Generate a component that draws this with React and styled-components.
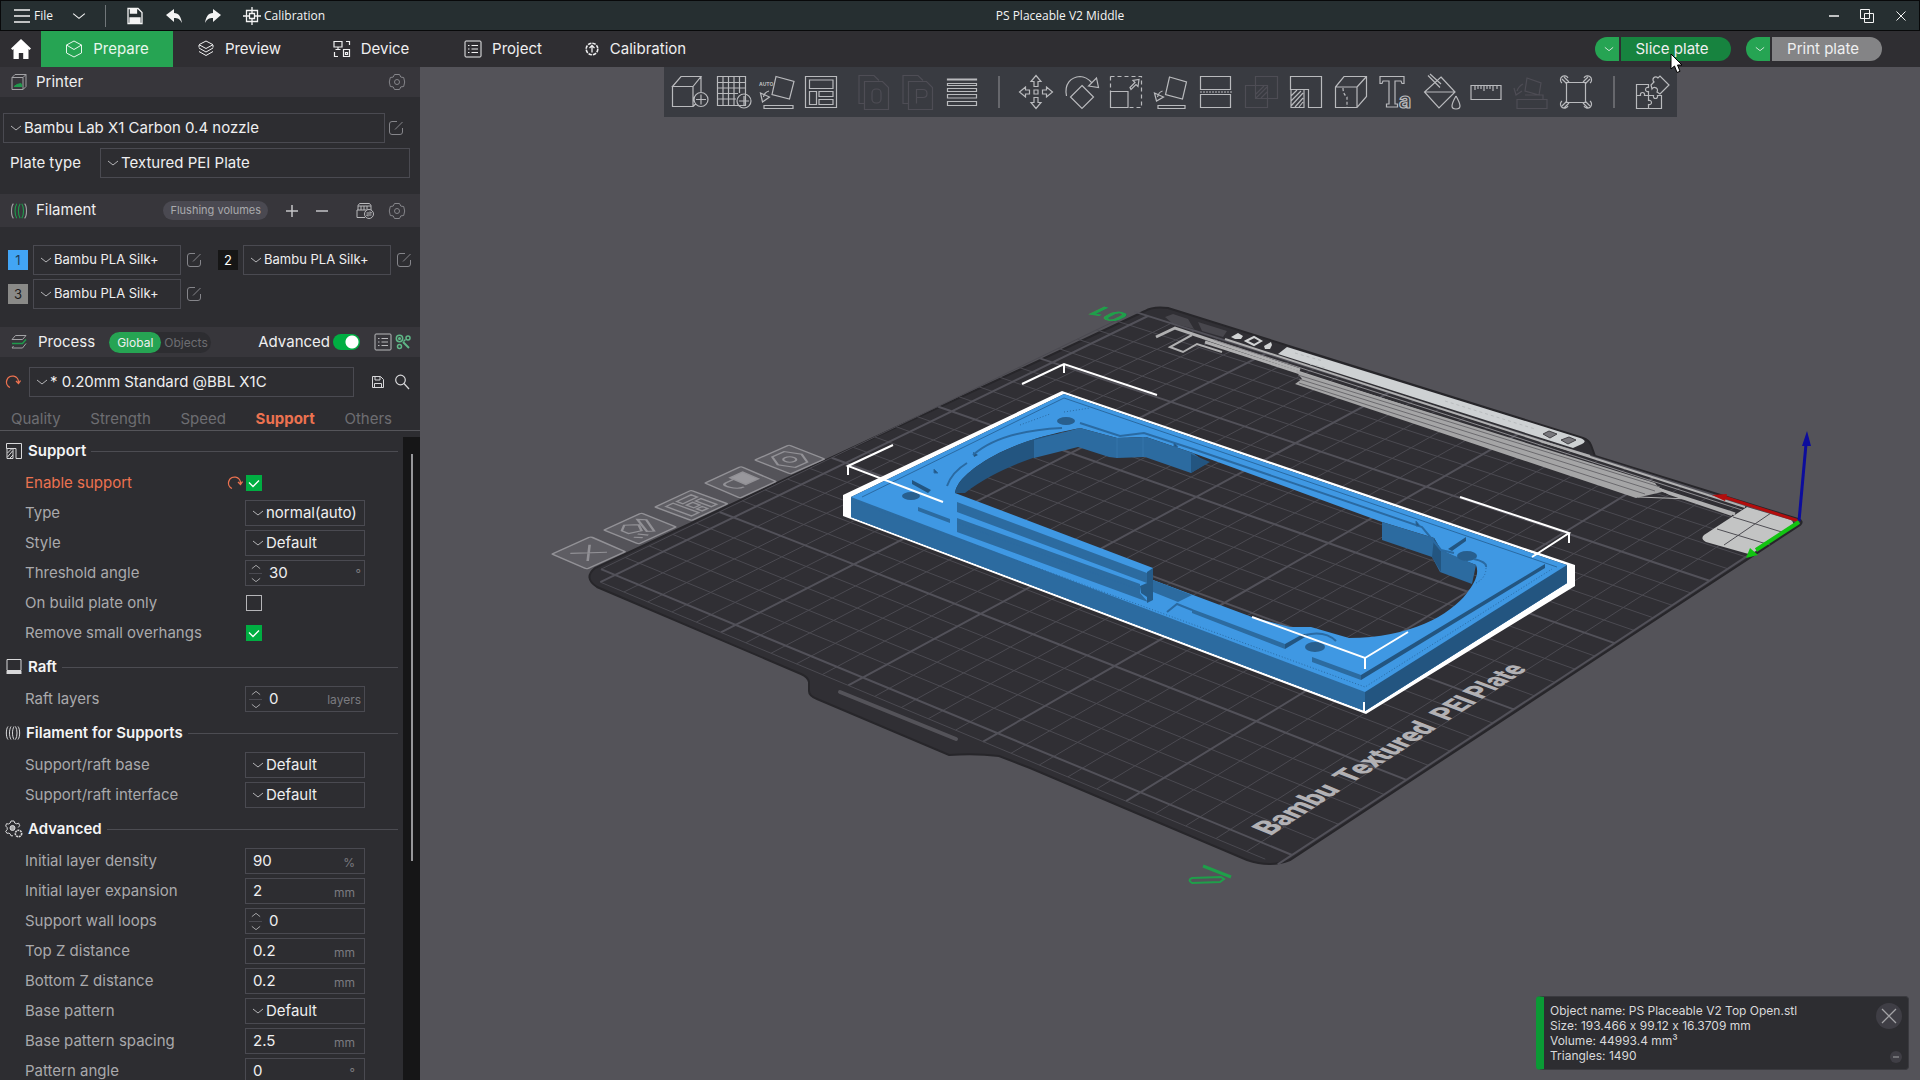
import React from 'react'
import styled, { createGlobalStyle } from 'styled-components'

const GlobalStyle = createGlobalStyle`
  * {
    box-sizing: border-box;
  }

  body {
    margin: 0;
    overflow: hidden;
    background: #2d2d31;
    color: #efeff0;
    font-family: Inter, Roboto, sans-serif;
    font-size: 15px;
    font-feature-settings: "calt" 0;
  }

  button, input, select {
    margin: 0;
    padding: 0;
    border: 0;
    border-radius: 0;
    outline: 0;
    background: none;
    color: inherit;
    font: inherit;
  }

  svg {
    display: block;
    flex: none;
  }
`

/* ---------- icons ---------- */

const Icon = ({ size = 16, box = size, children, ...props }) => (
  <svg
    width={size}
    height={size}
    viewBox={`0 0 ${box} ${box}`}
    fill="none"
    stroke="currentColor"
    aria-hidden="true"
    {...props}
  >
    {children}
  </svg>
)

const Chevron = ({ size = 12, ...props }) => (
  <Icon size={size} box={12} {...props}><path d="M1 4l5 4 5-4" /></Icon>
)

const EditIcon = () => (
  <Icon size={16}>
    <path d="M9 1.500H4A2.500 2.500 0 0 0 1.500 4v8A2.500 2.500 0 0 0 4 14.500h8a2.500 2.500 0 0 0 2.500-2.500V8M7 9.500L14.500 2" />
  </Icon>
)

const UndoIcon = () => (
  <Icon size={16} strokeWidth="1.300">
    <path d="M5 13.500A6 6 0 1 1 13.500 8.500M11 7l2.500 2.500L15.500 6.500" />
  </Icon>
)

const GearIcon = () => (
  <Icon size={18}>
    <path d="M6.500 1.500h5l1.300 2.600 2.900.4 1 4.500-1 4.500-2.900.4-1.300 2.600h-5l-1.300-2.600-2.900-.4-1-4.500 1-4.500 2.900-.4z" strokeLinejoin="round" />
    <circle cx="9" cy="9" r="2.500" />
  </Icon>
)

const PrinterIcon = () => (
  <Icon size={18}>
    <path d="M2 4.500L5 1.500h11v12l-3 3H2zM2 4.500h11v12M13 4.500l3-3" />
    <path d="M4 13.500h8l-1-3-4 1z" fill="#1f9a4c" stroke="#1f9a4c" />
  </Icon>
)

const SpoolIcon = ({ accent = 'currentColor', size = 16 }) => (
  <Icon size={size} box={16}>
    <path d="M3 1.500C.800 4 .800 12 3 14.500M13 1.500c2.200 2.500 2.200 10.500 0 13" />
    <g stroke={accent}>
      <path d="M6 1.500c-2 3-2 10 0 13M9 1.500c-2 3-2 10 0 13M10.500 1.500c2 3 2 10 0 13" />
    </g>
  </Icon>
)

const ProcessIcon = () => (
  <Icon size={18}>
    <path d="M5.500 2.500h10.500l-3.500 4H2zM16 10.500l-3.500 4.500H2l1.500-2" />
    <path d="M2 10.500h10.500L16 6.500" stroke="#1f9a4c" strokeWidth="1.500" />
  </Icon>
)

const AmsIcon = () => (
  <Icon size={18}>
    <path d="M2 8V3.500L3.500 1.500h10L15 3.500V8M2 4h13M5 4v4M8 4v4M11 4v4M1 8v7.500h8M1 8h9" />
    <circle cx="13" cy="12" r="4.500" />
    <path d="M10.500 11h5l-1.500-1.500M15.500 13h-5l1.500 1.500" />
  </Icon>
)

const ListIcon = ({ size = 18 }) => (
  <Icon size={size} box={18}>
    <rect x="1" y="1" width="16" height="16" rx="1" />
    <path d="M4 5.500h1.500M7.500 5.500H14M4 9h1.500M7.500 9H14M4 12.500h1.500M7.500 12.500H14" />
  </Icon>
)

const CompareIcon = () => (
  <Icon size={16} strokeWidth="1.500" color="#5fb787">
    <circle cx="4.500" cy="4.500" r="3.200" />
    <circle cx="4.500" cy="4.500" r=".800" />
    <circle cx="4.500" cy="12.500" r="2" />
    <circle cx="13" cy="4" r="2" />
    <path d="M8 8l6 6" strokeWidth="2" />
    <path d="M8.500 7.500l2-2" />
  </Icon>
)

const SmallSaveIcon = () => (
  <Icon size={14}>
    <path d="M1.500 1.500h8l3 3v8h-11zM4 1.500V5h5V1.500M3.500 12.500V8.500h7v4" />
  </Icon>
)

const SearchIcon = () => (
  <Icon size={16} strokeWidth="1.200"><circle cx="6.500" cy="6" r="4.800" /><path d="M10 9.500l5 5.500" /></Icon>
)

const SupportIcon = () => (
  <Icon size={18}>
    <path d="M1.500 1.500h15v15H11v-10H1.500zM2 6.500v10h6v-10M2.500 11l4-4M2.500 15l5-6M5 16l3-3" />
  </Icon>
)

const RaftIcon = () => (
  <Icon size={18}><path d="M2 1.500h14v11H2z" /><path d="M1.500 14.500h15" strokeWidth="3" /></Icon>
)

const GearsIcon = () => (
  <Icon size={18}>
    <path d="M6 1l3 0 .7 2 2 .8 2-.6 1 2.500-1.500 1.800M6 1l-.8 2-1.700 1-2-.3L.7 6l1.500 1.700v2L.7 11.300l1.200 2 2-.2 1.500 1 .6 1.700H8" />
    <circle cx="7.500" cy="8" r="2.500" fill="#a8a8aa" />
    <circle cx="13.500" cy="13.500" r="3.200" strokeDasharray="2 .7" strokeWidth="1.600" />
  </Icon>
)

const CubeIcon = () => (
  <Icon size={18}>
    <path d="M9 1l7.500 4v8L9 17l-7.500-4V5zM1.500 5L9 9.500 16.500 5" strokeLinejoin="round" />
  </Icon>
)

const LayersIcon = () => (
  <Icon size={18} strokeLinejoin="round">
    <path d="M9 1l7 3.700L9 8.500 2 4.700zM2 8l7 4 7-4M2 11.500l7 4 7-4M2 5v2.500M16 5v2.500" />
  </Icon>
)

const DeviceIcon = () => (
  <Icon size={18} strokeWidth="1.200">
    <path d="M1 1.500h8v5.500H1zM5 7v2.500M2.500 9.500h5M13 1.500h3.500V5M1.500 12v4.500H5M10.500 9.500h6v7h-6zM12.500 12.500h2v2h-2z" />
  </Icon>
)

const FlowIcon = () => (
  <Icon size={16} strokeWidth="1.300">
    <circle cx="8" cy="8" r="5.800" strokeDasharray="3.500 1" strokeWidth="1.600" />
    <path d="M8 4.500v7M5.500 7L8 4.500 10.500 7" />
  </Icon>
)

const HomeIcon = () => (
  <Icon size={22} fill="#fff" stroke="none">
    <path d="M11 1L1 10.500 2.500 12l1-1V21h5.300v-6h4.400v6h5.300V11l1 1 1.500-1.500z" />
  </Icon>
)

const Pointer = styled.svg`
  position: absolute;
  top: 16px;
  left: 75px;
  z-index: 5;
  pointer-events: none;
`

/* ---------- title bar ---------- */

const TitleBar = styled.header`
  display: flex;
  flex: none;
  align-items: center;
  height: 31px;
  padding: 0 10px 0 12px;
  border: 1px solid #08090a;
  background: #262f31;
  color: #f4f4f4;
  font-family: "Open Sans", "Noto Sans", sans-serif;
  font-size: 12px;
`

const TitleGroup = styled.div`
  display: flex;
  align-items: center;
  gap: ${props => props.$gap}px;
`

const TitleButton = styled.button`
  display: flex;
  align-items: center;
  gap: 3px;
`

const TitleDivider = styled.span`
  width: 1px;
  height: 22px;
  margin: 0 20px 0 0;
  background: #71777a;
`

const Title = styled.h1`
  flex: 1;
  margin: 0;
  padding-right: 32px;
  font-size: 12px;
  font-weight: 400;
  text-align: center;
`

/* ---------- navigation ---------- */

const NavBar = styled.nav`
  display: flex;
  flex: none;
  align-items: center;
  height: 36px;
  padding-right: 38px;
  background: #2f2e32;
`

const HomeButton = styled.button`
  display: flex;
  justify-content: center;
  width: 41px;
`

const NavTab = styled.button`
  display: flex;
  align-items: center;
  justify-content: center;
  gap: 10px;
  width: 132px;
  height: 36px;
  padding-bottom: 1px;
  background: ${props => (props.$active ? '#26a453' : 'transparent')};
  color: ${props => (props.$active ? '#e6f7ec' : '#efeff0')};
`

const NavActions = styled.div`
  display: flex;
  gap: 15px;
  margin-left: auto;
`

const SplitButton = styled.div`
  position: relative;
  display: flex;
  gap: 2px;
  height: 24px;
`

const SplitToggle = styled.button`
  display: flex;
  align-items: center;
  justify-content: center;
  width: 24px;
  padding-left: 4px;
  border-radius: 12px 0 0 12px;
  background: #26a453;
`

const SplitMain = styled.button`
  width: 110px;
  padding: 0 8px 1px 0;
  border-radius: 0 12px 12px 0;
  background: ${props => (props.$primary ? '#17833f' : '#848486')};
`

/* ---------- sidebar ---------- */

const Shell = styled.div`
  display: flex;
  flex-direction: column;
  height: 100vh;
`

const Body = styled.div`
  display: flex;
  flex: 1;
  min-height: 0;
`

const Sidebar = styled.aside`
  display: flex;
  flex: none;
  flex-direction: column;
  width: 420px;
  background: #2d2d31;
`

const PanelHeader = styled.div`
  display: flex;
  flex: none;
  align-items: center;
  gap: ${props => props.$gap || 16}px;
  height: ${props => props.$height || 30}px;
  padding: 0 ${props => props.$end || 14}px 0 10px;
  background: #37363b;
  color: #a3a3a6;
`

const PanelTitle = styled.h2`
  margin: 0;
  padding-bottom: 2px;
  color: #efeff0;
  font-size: 15px;
  font-weight: 400;
`

const HeaderTools = styled.div`
  display: flex;
  align-items: center;
  gap: ${props => props.$gap || 0}px;
  margin-left: auto;
`

const IconButton = styled.button`
  display: flex;
  flex: none;
  align-items: center;
  justify-content: center;
  color: ${props => props.$color || '#85858a'};
`

const SelectBox = styled.div`
  display: flex;
  flex: ${props => (props.$width ? 'none' : '1')};
  align-items: center;
  width: ${props => (props.$width ? `${props.$width}px` : 'auto')};
  height: ${props => props.$height || 30}px;
  padding-left: 6px;
  border: 1px solid #4a4a51;
  color: #b5b5b8;
`

const SelectInput = styled.select`
  flex: 1;
  min-width: 0;
  height: 100%;
  padding: 0 0 2px 2px;
  appearance: none;
  color: #efeff0;
  font-size: ${props => props.$size || 15}px;
`

const PrinterSettings = styled.div`
  display: flex;
  flex-direction: column;
  gap: 5px;
  padding: 16px 10px 16px 3px;
`

const SettingsLine = styled.div`
  display: flex;
  align-items: center;
  gap: ${props => props.$gap || 0}px;
  padding: ${props => props.$padding || 0};
`

const PlateLabel = styled.label`
  width: 97px;
  padding: 0 0 2px 7px;
`

const FlushButton = styled.button`
  height: 19px;
  margin-right: 2px;
  padding: 0 7px 1px;
  border-radius: 10px;
  background: #4a4951;
  color: #a9a9ad;
  font-size: 11px;
`

const Filaments = styled.div`
  display: grid;
  grid-template-columns: 210px 210px;
  row-gap: 4px;
  padding: 18px 0;
`

const Filament = styled.div`
  display: flex;
  align-items: center;
  padding-left: 8px;
`

const Swatch = styled.button`
  width: 20px;
  height: 20px;
  margin-right: 5px;
  background: ${props => props.$color};
  color: ${props => props.$text};
  font-size: 13px;
`

const FilamentEdit = styled(IconButton)`
  margin-left: 5px;
`

const ScopeSwitch = styled.div`
  display: flex;
  height: 21px;
  margin-left: 4px;
  border-radius: 11px;
  background: #2d2d31;
  font-size: 12px;
`

const ScopeButton = styled.button`
  padding: 0 ${props => (props.$active ? 8 : 3)}px;
  border-radius: 11px;
  background: ${props => (props.$active ? '#26a453' : 'transparent')};
  color: ${props => (props.$active ? '#efeff0' : '#6d6d72')};
`

const Switch = styled.input`
  width: 27px;
  height: 16px;
  margin-right: 11px;
  border-radius: 8px;
  appearance: none;
  background: radial-gradient(circle at 19px 8px, #fff 6px, transparent 7px) #00ae42;
`

const PresetLine = styled.div`
  display: flex;
  align-items: center;
  padding: 10px 10px 10px 5px;
`

const PresetTools = styled.div`
  display: flex;
  align-items: center;
  gap: 9px;
  margin-left: 17px;
`

const Tabs = styled.div`
  display: flex;
  flex: none;
  justify-content: space-between;
  height: 24px;
  padding: 0 28px 0 11px;
  border-bottom: 1px solid #55555a;
`

const Tab = styled.button`
  color: ${props => (props.$active ? '#ec7250' : '#6d6d72')};
  font-weight: ${props => (props.$active ? 700 : 400)};
`

const ScrollArea = styled.div`
  display: flex;
  flex: 1;
  min-height: 0;
  margin-top: 6px;
`

const Options = styled.div`
  flex: 1;
  margin-top: -5px;
  padding-right: 5px;
  overflow: hidden;
`

const ScrollTrack = styled.div`
  width: 17px;
  padding: 17px 7px 0 8px;
  background: #161617;
`

const ScrollThumb = styled.div`
  height: 65%;
  background: #97979a;
`

const OptionGroup = styled.fieldset`
  margin: 0;
  padding: 0;
  border: 0;
`

const GroupTitle = styled.div`
  display: flex;
  align-items: center;
  gap: 5px;
  height: 36px;
  padding: 2px 0 0 5px;
  color: #d8d8da;

  &::after {
    content: '';
    flex: 1;
    height: 1px;
    background: #4c4c52;
  }
`

const GroupName = styled.h3`
  margin: 0;
  padding-bottom: 2px;
  color: #f4f4f5;
  font-size: 15px;
  font-weight: 600;
`

const OptionRow = styled.div`
  display: flex;
  align-items: center;
  height: 30px;
  padding-left: 25px;
`

const OptionLabel = styled.label`
  width: 200px;
  padding-bottom: 2px;
  color: ${props => (props.$changed ? '#ec7250' : '#a9a9ac')};
`

const ResetSlot = styled.span`
  width: 21px;
  padding-left: 2px;
  color: #ec7250;
`

const Field = styled.div`
  display: flex;
  align-items: center;
  width: 120px;
  height: 26px;
  margin-left: -1px;
  padding-right: ${props => (props.$tight ? 3 : 9)}px;
  border: 1px solid #4a4a51;
`

const FieldInput = styled.input`
  flex: 1;
  min-width: 0;
  padding: 0 0 2px 7px;
`

const Unit = styled.span`
  padding-top: ${props => (props.$tight ? 0 : 2)}px;
  color: #7b7b80;
  font-size: 12px;
`

const Spinner = styled.div`
  display: flex;
  flex-direction: column;
  margin-left: 3px;
  color: #b9b9bc;
`

const SpinButton = styled.button`
  display: flex;
  align-items: center;
  justify-content: center;
  width: 13px;
  height: 12px;

  & + & {
    border-top: 1px solid #4a4a51;
  }
`

const Check = styled.input`
  width: 16px;
  height: 16px;
  appearance: none;
  border: 1px solid #b5b5b8;

  &:checked {
    border: 0;
    background: #00ae42;
  }
`

const CheckWrap = styled.span`
  display: grid;
  color: #fff;

  & > * {
    grid-area: 1 / 1;
  }

  & > svg {
    pointer-events: none;
  }
`

const OptionSelectWrap = styled.div`
  display: flex;
  margin-left: -1px;
`

/* ---------- viewport ---------- */

const Viewport = styled.main`
  position: relative;
  display: flex;
  flex: 1;
  justify-content: center;
  align-items: flex-start;
  min-width: 0;
  background: #545359;
`

const Scene = styled.svg`
  position: absolute;
  inset: 0;
  width: 100%;
  height: 100%;
`

const Toolbar = styled.div`
  position: relative;
  display: flex;
  align-items: center;
  height: 50px;
  padding: 0 3px;
  background: #393b41;
`

const ToolGroup = styled.div`
  display: flex;
  margin-right: ${props => props.$after || 0}px;
`

const ToolButton = styled.button`
  display: flex;
  align-items: center;
  justify-content: center;
  width: ${props => props.$width || 45}px;
  height: 50px;
  color: ${props => (props.disabled ? '#4e4d55' : '#b9babd')};
`

const ToolDivider = styled.span`
  width: 2px;
  height: 32px;
  margin: 0 14px;
  background: #66676c;
`

const InfoCard = styled.section`
  position: absolute;
  right: 11px;
  bottom: 10px;
  display: flex;
  justify-content: space-between;
  width: 373px;
  padding: 6px 6px 6px 6px;
  border: 1px solid #3a3a3f;
  border-left: 8px solid #0a9a35;
  border-radius: 4px;
  background: #2d2d31;
`

const InfoText = styled.p`
  margin: 0;
  color: #d9d9db;
  font-size: 12px;
  line-height: 15px;
`

const InfoTools = styled.div`
  display: flex;
  flex-direction: column;
  align-items: center;
  justify-content: space-between;
`

const RoundButton = styled.button`
  display: flex;
  align-items: center;
  justify-content: center;
  width: ${props => props.$size}px;
  height: ${props => props.$size}px;
  border-radius: 50%;
  background: #3f3e45;
  color: #a3a3a6;

  &:last-child {
    align-self: flex-end;
  }
`

/* ---------- plate projection ---------- */

const PLATE = 250
const CORNERS = [[1799, 522], [1148, 316], [615, 575], [1292, 855]]

const makeProjection = ([a, b, c, d]) => {
  const dx1 = b[0] - c[0]
  const dx2 = d[0] - c[0]
  const sx = a[0] - b[0] + c[0] - d[0]
  const dy1 = b[1] - c[1]
  const dy2 = d[1] - c[1]
  const sy = a[1] - b[1] + c[1] - d[1]
  const det = dx1 * dy2 - dx2 * dy1
  const g = (sx * dy2 - dx2 * sy) / det
  const h = (dx1 * sy - sx * dy1) / det

  return (x, y) => {
    const u = x / PLATE
    const v = y / PLATE
    const w = g * u + h * v + 1
    return [
      ((b[0] - a[0] + g * b[0]) * u + (d[0] - a[0] + h * d[0]) * v + a[0]) / w,
      ((b[1] - a[1] + g * b[1]) * u + (d[1] - a[1] + h * d[1]) * v + a[1]) / w,
    ]
  }
}

const project = makeProjection(CORNERS)

const segment = (x1, y1, x2, y2) => `M${project(x1, y1)}L${project(x2, y2)}`

// affine frame lying on the plate at x, y; turned frames read along -y
const planeFrame = (x, y, turned) => {
  const o = project(x, y)
  const px = project(x + 1, y)
  const py = project(x, y + 1)
  const ex = [px[0] - o[0], px[1] - o[1]]
  const ey = [py[0] - o[0], py[1] - o[1]]
  const right = turned ? [-ey[0], -ey[1]] : ex
  const down = turned ? [-ex[0], -ex[1]] : [-ey[0], -ey[1]]
  return `matrix(${[...right, ...down, ...o].join(' ')})`
}

const gridSteps = Array.from({ length: 26 }, (_, i) => i * 10)

const gridPath = steps => steps
  .map(s => segment(s, 0, s, 256) + segment(0, s, 256, s))
  .join('')

const plateWords = [
  { text: 'Bambu', y: 246 },
  { text: 'Textured', y: 211 },
  { text: 'PEI', y: 167 },
  { text: 'Plate', y: 151 },
]

const Grid = () => (
  <g fill="none">
    <path d={gridPath(gridSteps.filter(s => s % 50))} stroke="#4b4a51" />
    <path d={gridPath(gridSteps.filter(s => s % 50 === 0))} stroke="#525159" strokeWidth="2" />
    <path d={segment(256, 4, 256, 250) + segment(4, 256, 250, 256)} stroke="#4b4a51" />
  </g>
)

const plateBadges = [
  { frame: '38.600 -17.300 34.700 15 552 554', art: <path d="M.25 .25L.75 .75M.75 .25L.25 .75" /> },
  { frame: '37.500 -17 34.500 14 604 530', art: <path d="M.2 .3L.4 .15 .6 .35 .45 .6 .2 .5zM.75 .15L.85 .3 .6 .8 .5 .7zM.15 .7L.25 .85M.3 .65L.4 .85" /> },
  { frame: '36 -16.700 36.500 13.500 655 507', art: <path d="M.15 .15H.35V.85H.15zM.45 .15H.85V.32H.45zM.45 .42H.62V.62H.45zM.7 .42H.85V.85H.7zM.45 .7H.6V.85H.45z" /> },
  { frame: '36 -16.500 35 15 705 483', art: <><path d="M.5 .2H.85V.65H.5z" fill="#98979c" /><path d="M.5 .3H.3Q.15 .3 .2 .5T.4 .7" /></> },
  { frame: '34 -15 35.500 14 755 460', art: <><path d="M.35 .15L.7 .15 .85 .5 .65 .85 .3 .85 .15 .5z" /><circle cx=".5" cy=".5" r=".13" /></> },
]

const Plate = () => (
  <g>
    <path
      d="M1145 311Q1153 306 1168 308L1184 313 1583 438Q1589 440 1591 445L1595 456 1798 519Q1804 521 1800 525L1600 656 1290 860Q1270 868 1247 860L1030 768 999 756Q975 753 949 755L817 699Q809 696 809 691V682Q808 677 801 674L597 587Q583 578 595 568Z"
      fill="#302f34"
      stroke="#27262a"
      strokeWidth="2"
    />
    <path d="M1165 317L1173 314 1188 319 1194 329 1172 323ZM1198 322L1227 331 1223 337 1202 331Z" fill="#48474d" />
    <path d="M840 692L956 739" stroke="#545359" strokeWidth="4" strokeLinecap="round" />
    <Grid />
    <path d="M1747 507L1791 520Q1795 523 1792 526L1754 552Q1750 555 1745 553L1706 542Q1700 539 1704 535Z" fill="#c3c4c4" />
    <path d="M1771 513L1724 545M1733 517L1785 533M1717 529L1770 545" stroke="#4e4d53" />
    <g fill="none" stroke="#b0b0b1" strokeWidth="3">
      <path d="M1156 337L1175 328 1228 346 1300 370" />
      <path d="M1192 335L1170 347 1183 352 1197 344 1222 352" strokeWidth="2" />
      <path d="M1225 339L1745 507" strokeWidth="2" />
      <path d="M1205 342L1735 514" />
      <path d="M1214 340L1742 510" strokeWidth="1" stroke="#8c8b8f" />
      <path d="M1638 497L1690 499" strokeWidth="1" />
      <path d="M1650 484L1670 494 1732 515" strokeWidth="2" />
    </g>
    <path d="M1296 371L1655 483 1662 492 1636 498 1295 384 1302 379Z" fill="#a5a5a6" />
    <path d="M1298 375L1660 487M1299 379L1655 491M1299 383L1645 494" stroke="#6b6a6e" />
    <path d="M1287 347L1580 438Q1588 441 1582 444L1573 448 1278 354Z" fill="#ced1d3" />
    <path d="M1590 456L1540 441" stroke="#b0b0b1" strokeWidth="2" />
    <path d="M1543 434l6-3 8 3-7 4zM1561 440l8-3 7 3-8 4z" fill="#77767b" stroke="#444347" />
    <path d="M1295 353l28 8M1310 364l16 4M1445 401l90 28" stroke="#b8bbbd" strokeDasharray="3 3" />
    <g fill="#d2d4d5">
      <path d="M1231 337l7-4 5 3-2 3-6 0zM1264 346l7-4 1 3-2 4-5 0z" />
      <path d="M1246 341l8-4 7 4-7 4z" fill="none" stroke="#d2d4d5" strokeWidth="2" />
    </g>
    <g fill="#b2b1b4" fontFamily="Roboto, sans-serif" fontWeight="900" fontSize="9.500">
      {plateWords.map(word => (
        <text key={word.text} transform={planeFrame(10, word.y, true)}>{word.text}</text>
      ))}
    </g>
    <text transform={planeFrame(255, 3)} fill="#1f9f4a" fontFamily="Roboto, sans-serif" fontWeight="700" fontSize="12">01</text>
    <g fill="none" stroke="#1f9f4a" strokeWidth="3">
      <path d="M1203 866L1231 877" />
      <path d="M1192 878L1221 877 1224 879 1220 882 1192 883Q1187 880 1192 878Z" strokeWidth="2" />
    </g>
    {plateBadges.map(({ frame, art }) => (
      <g key={frame} transform={`matrix(${frame})`} fill="none" stroke="#929196" strokeWidth=".05">
        <rect width="1" height="1" rx=".04" fill="#5e5d63" />
        {art}
      </g>
    ))}
  </g>
)

const holeEdge = 'M955 493C957 478 980 463 999 453C1020 443 1040 436 1080 428L1117 438 1146 437 1193 453 1382 522 1434 538 1441 550 1453 556 1476 565C1480 575 1473 585 1467 593C1450 615 1410 638 1349 638L1311 627 1290 627 1252 617 1153 580V568L987 505Z'

const Model = () => (
  <g>
    <path d="M1062 391L843 495V516L1366 714 1575 586V565ZM851 497L1064 394 1567 565V583L1365 711 851 517Z" fill="#fff" fillRule="evenodd" />
    <path d={`M851 497L1064 394 1567 565V583L1365 711 851 517Z${holeEdge}`} fill="#3f98e3" fillRule="evenodd" />

    <path d="M851 497L1365 692V711L851 517Z" fill="#2c6ba0" />
    <path d="M1365 692L1567 565V583L1365 711Z" fill="#235580" />

    <path d="M955 493C957 478 980 463 999 453C1020 443 1040 436 1062 433L1064 448C1030 458 995 470 965 493Z" fill="#235580" />
    <path d="M1034 440L1080 428 1117 438 1146 437 1193 453 1207 463 1191 473 1145 457 1117 458 1109 457 1078 447 1034 458Z" fill="#2c6ba0" />
    <path d="M1191 454L1210 462 1191 473Z" fill="#235580" />
    <path d="M1117 438V458M1143 437V457" stroke="#3476ab" />
    <path d="M1382 522L1434 538 1441 550 1476 565 1472 584 1440 572 1432 557 1382 540Z" fill="#2c6ba0" />
    <path d="M1434 538L1441 550V572L1432 557Z" fill="#235580" />

    <path d="M957 502L1147 573V583L957 512ZM957 518L1140 584V593L1148 602 957 532Z" fill="#2c6ba0" />
    <path d="M1147 572L1153 568V600L1147 603ZM1140 586L1147 583V597L1141 593Z" fill="#255b88" />
    <path d="M1153 580L1192 595 1178 602 1153 592Z" fill="#2c6ba0" />
    <path d="M1192 609L1285 644V649L1192 613ZM1312 657L1361 675V680L1312 662ZM918 507L950 519V523L918 511Z" fill="#2c6ba0" />
    <path d="M1361 675L1545 564V568L1361 680ZM1285 644L1303 634H1310L1285 649Z" fill="#235580" />
    <path d="M1448 549L1466 537V541L1452 551ZM973 452L978 455 974 457ZM912 480L931 490 928 493 912 484Z" fill="#235580" />

    <g fill="#285f8e">
      <ellipse cx="1066" cy="421" rx="9" ry="4" />
      <ellipse cx="911" cy="496" rx="9" ry="4" />
      <ellipse cx="1467" cy="556" rx="10" ry="5" />
      <ellipse cx="1315" cy="647" rx="10" ry="5" />
    </g>
    <g fill="none" stroke="#2a6aa2">
      <path d="M862 497L1064 398 1557 567" />
      <path d="M973 455C990 440 1020 430 1062 428M947 486Q952 472 967 463" strokeWidth="2" />
      <path d="M1080 423L1120 436 1144 433 1193 449 1422 527 1441 550 1454 553" strokeWidth="2" />
      <path d="M1305 635Q1325 630 1336 641M1474 559Q1487 562 1486 567M1167 612L1177 604 1192 610" strokeWidth="2" />
      <path d="M856 502L1365 687 1552 569M1476 583Q1486 578 1486 568" strokeDasharray="1 2" />
      <path d="M957 523L1140 590M1064 412L1090 408M1020 425L1050 414" strokeDasharray="1 2" />
      <path d="M1174 442v5h4zM1416 521v5h4zM934 469v4h4z" fill="#235580" />
    </g>

    <g fill="none" stroke="#fff" strokeWidth="2">
      <path d="M1022 384L1064 364 1157 395M1064 364v9" />
      <path d="M893 445L848 466 943 502M848 466v9" />
      <path d="M1460 497L1569 533 1532 557M1569 533v10" />
      <path d="M1252 617L1365 658 1408 632M1365 658v11M1364 702v9" />
    </g>
  </g>
)

const Axes = () => (
  <g fill="none" strokeWidth="4">
    <path d="M1799 521L1724 497" stroke="#b30d0d" strokeWidth="3" />
    <path d="M1712 495l15-1-2 7z" fill="#b30d0d" />
    <path d="M1799 521L1806 444" stroke="#0d0d9c" strokeWidth="3" />
    <path d="M1807 431l4 15h-9z" fill="#0d0d9c" stroke="none" />
    <path d="M1799 522L1756 550" stroke="#12c412" />
    <path d="M1746 558l4-10 8 7z" fill="#12c412" />
  </g>
)

/* ---------- toolbar art ---------- */

const tools = {
  cube: <path d="M1.500 12.500L10 2.500h20L22 12.500zM1.500 12.500H22v20H1.500zM22 32.500l3-3M30 2.500V18M37 25.500a7 7 0 1 0-14 0 7 7 0 1 0 14 0M30 20.500v10M25 25.500h10" />,
  addPlate: <path d="M2.500 2.500h28v29h-28zM8 3v28M13.500 3v28M19 3v28M24.500 3v16M3 8.500h27M3 14h27M3 19.500h20M3 25h18M36 27a7 7 0 1 0-14 0 7 7 0 1 0 14 0M29 22v10M24 27h10" />,
  auto: (
    <>
      <path d="M17 2.500l18 5-4.500 17.500-17.500-4.500zM5 31.500h29v3H5zM10 17c-4 1-5 3-5.500 6M1.500 19l2 9 7-5z" />
      <text x="0" y="12" fill="currentColor" stroke="none" fontSize="5" fontWeight="700">AUTO</text>
    </>
  ),
  arrange: <path d="M2.500 2.500h31v31h-31zM6.500 6h23.500v8.500H6.500zM6.500 17.500h7v13h-7zM16 17.500h14v5H16zM16 25.500h14v5H16z" />,
  objects: (
    <>
      <path d="M9 29.500H3v-28h15l5 5M8.500 7.500h18l6 6v22h-24z" />
      <rect x="16" y="15" width="9" height="14" rx="4" />
    </>
  ),
  parts: <path d="M9 29.500H3v-28h15l5 5M8.500 7.500h18l6 6v22h-24zM16.500 29.500V15.500H23q4 0 4 4t-4 4h-6" />,
  layers: <path d="M3.500 5h29v1h-29zM3.500 9.500h29v2h-29zM3.500 14.500h29v3h-29zM3.500 20.500h29V24h-29zM3.500 27.500h29v4h-29z" />,
  move: <path d="M18 1.500l5 6h-3v5h-4v-5h-3zM18 34.500l5-6h-3v-5h-4v5h-3zM1.500 18l6-5v3h4v4h-4v3zM34.500 18l-6-5v3h-4v4h4v3zM16 16h4v4h-4z" />,
  rotate: <path d="M19 11.500l11.500 11.500L19 34.500 7.500 23zM3.500 22C1 10 8 3 17 2.500c6 0 9 3 12 6.500M25.500 12l10 1.500L33.500 4z" />,
  scale: <><path d="M2.500 2.500h31v31h-31" strokeDasharray="4 3" /><path d="M2.500 2.500v15" strokeDasharray="4 3" /><path d="M2.500 17.500H20v16H2.500zM22 13.500l5-5-2-2 6-1-1 7-2-2-5 5z" /></>,
  flatten: <path d="M16.500 3l17 5-4 17-17-4.500zM5 31.500h27v3H5zM9.500 17c-3 1-4 2-5 6M1.500 19l2 8 7-4z" />,
  cut: <><path d="M2.500 2.500h30v13h-30zM2.500 20.500h30v13h-30z" /><path d="M2 18h32" strokeDasharray="2 1" /></>,
  boolean: <path d="M12.500 2.500h22v22h-22zM2.500 11.500h22v22h-22zM13 20l8-8M13 24l11-11M18 24l6-6" />,
  support: <path d="M2.500 2.500h31v31h-13v-18h-18zM3 15.500v18h13v-18M3 22l6-6M3 27l10-10M3 32l12-13M7 33l8-9M11 33l4-5" />,
  seam: <><path d="M2.500 13L11 2.500h22.500v20L24 33.500H2.500zM2.500 13H24v20M24 13l9.500-10.500" /><path d="M10 14q0 6 4 9v10" strokeDasharray="3 2" /></>,
  text: (
    <>
      <path d="M2 2.500h24v7h-2l-1-2.500h-6v23h2.500v3h-11v-3H11V7H5L4 9.500H2z" />
      <text x="21" y="34" fill="none" fontSize="21" fontWeight="700">a</text>
    </>
  ),
  paint: <path d="M18 3l14 15-16 16L1.500 18zM1.500 18H32M5 1.500l12 12M7 0l11 10M33 22q-4 7-4 10t4 3 4-3-4-10" />,
  measure: <path d="M3 11.500h30v14H3zM7 12v4M10 12v3M13 12v3M16 12v5M19 12v3M22 12v3M25 12v5M29 12v3" />,
  assemble: <path d="M14 4l14 5-2 12-14-4zM4 25.500h30v9H4zM10 10c-4 2-5 4-6 7M1 14l2 7 6-4M12 21h18v4" />,
  fit: (
    <>
      <path d="M8.500 8.500h19v20h-19z" />
      <path d="M4 9a4 4 0 1 1 6-5M26 4a4 4 0 1 1 6 5M4 27a4 4 0 1 0 6 5M26 32a4 4 0 1 0 6-5M4 5l5 5M6 3l5 5M32 5l-5 5M30 3l-5 5M4 32l5-5M6 34l5-5M32 32l-5-5M30 34l-5-5" />
    </>
  ),
  puzzle: <path d="M3.500 10.500h12v3c-4-1-4 5 0 4v4h-4c1-4-5-4-4 0h-4zM3.500 21.500v13h12v-4c4 1 4-5 0-4v-5M15.500 34.500h13v-13h-4c1 4-5 4-4 0h-5M18 11l3-3c-3-3 1-7 4-4l2-2 9 9-9 9-3-2c2-4-3-6-5-3z" />,
}

const Tool = ({ name, label, ...props }) => (
  <ToolButton type="button" title={label} aria-label={label} {...props}>
    <Icon size={36} strokeWidth="1.200" overflow="visible">{tools[name]}</Icon>
  </ToolButton>
)

/* ---------- options ---------- */

const Combo = ({ id, value, label, width, height, size }) => (
  <SelectBox $width={width} $height={height}>
    <Chevron />
    <SelectInput id={id} aria-label={label} defaultValue={value} $size={size}>
      <option>{value}</option>
    </SelectInput>
  </SelectBox>
)

const NumberField = ({ id, value, unit, spin }) => (
  <Field $tight={spin}>
    {spin && (
      <Spinner>
        <SpinButton type="button" aria-label="Increase"><Chevron size={10} transform="rotate(180)" /></SpinButton>
        <SpinButton type="button" aria-label="Decrease"><Chevron size={10} /></SpinButton>
      </Spinner>
    )}
    <FieldInput id={id} defaultValue={value} size="4" />
    {unit && <Unit $tight={spin}>{unit}</Unit>}
  </Field>
)

const CheckField = ({ id, checked }) => (
  <CheckWrap>
    <Check id={id} type="checkbox" defaultChecked={checked} />
    {checked && <Icon size={16}><path d="M3 7.500l4 4 6-6" strokeWidth="1.300" /></Icon>}
  </CheckWrap>
)

const OptionSelect = ({ id, value }) => (
  <OptionSelectWrap>
    <Combo id={id} value={value} width={120} height={26} />
  </OptionSelectWrap>
)

const groups = [
  {
    name: 'Support',
    icon: <SupportIcon />,
    options: [
      { label: 'Enable support', type: 'check', checked: true, changed: true },
      { label: 'Type', type: 'select', value: 'normal(auto)' },
      { label: 'Style', type: 'select', value: 'Default' },
      { label: 'Threshold angle', value: '30', unit: '°', spin: true },
      { label: 'On build plate only', type: 'check', checked: false },
      { label: 'Remove small overhangs', type: 'check', checked: true },
    ],
  },
  {
    name: 'Raft',
    icon: <RaftIcon />,
    options: [{ label: 'Raft layers', value: '0', unit: 'layers', spin: true }],
  },
  {
    name: 'Filament for Supports',
    icon: <SpoolIcon size={16} />,
    options: [
      { label: 'Support/raft base', type: 'select', value: 'Default' },
      { label: 'Support/raft interface', type: 'select', value: 'Default' },
    ],
  },
  {
    name: 'Advanced',
    icon: <GearsIcon />,
    options: [
      { label: 'Initial layer density', value: '90', unit: '%' },
      { label: 'Initial layer expansion', value: '2', unit: 'mm' },
      { label: 'Support wall loops', value: '0', spin: true },
      { label: 'Top Z distance', value: '0.2', unit: 'mm' },
      { label: 'Bottom Z distance', value: '0.2', unit: 'mm' },
      { label: 'Base pattern', type: 'select', value: 'Default' },
      { label: 'Base pattern spacing', value: '2.5', unit: 'mm' },
      { label: 'Pattern angle', value: '0', unit: '°' },
    ],
  },
]

const Option = ({ option }) => {
  const id = option.label.toLowerCase().replace(/[^a-z]+/g, '-')

  return (
    <OptionRow>
      <OptionLabel htmlFor={id} $changed={option.changed}>{option.label}</OptionLabel>
      <ResetSlot>{option.changed && <UndoIcon />}</ResetSlot>
      {option.type === 'check' && <CheckField id={id} checked={option.checked} />}
      {option.type === 'select' && <OptionSelect id={id} value={option.value} />}
      {!option.type && <NumberField id={id} value={option.value} unit={option.unit} spin={option.spin} />}
    </OptionRow>
  )
}

const filaments = [
  { id: 1, color: '#42a5f5', text: '#1c3c5a' },
  { id: 2, color: '#161616', text: '#ffffff' },
  { id: 3, color: '#8a8a88', text: '#1c1c1c' },
]

const navTabs = [
  { label: 'Prepare', icon: <CubeIcon />, active: true },
  { label: 'Preview', icon: <LayersIcon /> },
  { label: 'Device', icon: <DeviceIcon /> },
  { label: 'Project', icon: <ListIcon /> },
  { label: 'Calibration', icon: <FlowIcon /> },
]

const AppSidebar = () => (
  <Sidebar>
    <PanelHeader $gap={8}>
      <PrinterIcon />
      <PanelTitle>Printer</PanelTitle>
      <HeaderTools><IconButton type="button" aria-label="Printer settings"><GearIcon /></IconButton></HeaderTools>
    </PanelHeader>
    <PrinterSettings>
      <SettingsLine $gap={3} $padding="0 6px 0 0">
        <Combo label="Printer" value="Bambu Lab X1 Carbon 0.4 nozzle" />
        <IconButton type="button" aria-label="Edit printer"><EditIcon /></IconButton>
      </SettingsLine>
      <SettingsLine>
        <PlateLabel htmlFor="plate-type">Plate type</PlateLabel>
        <Combo id="plate-type" value="Textured PEI Plate" />
      </SettingsLine>
    </PrinterSettings>

    <PanelHeader $height={33} $gap={8}>
      <SpoolIcon accent="#1f9a4c" size={18} />
      <PanelTitle>Filament</PanelTitle>
      <HeaderTools $gap={14}>
        <FlushButton type="button">Flushing volumes</FlushButton>
        <IconButton type="button" aria-label="Add filament" $color="#c5c5c8">
          <Icon size={16} strokeWidth="1.500"><path d="M8 2v12M2 8h12" /></Icon>
        </IconButton>
        <IconButton type="button" aria-label="Remove filament" $color="#c5c5c8">
          <Icon size={16} strokeWidth="1.500"><path d="M2 8h12" /></Icon>
        </IconButton>
        <SettingsLine $padding="0 0 0 12px">
          <IconButton type="button" aria-label="Sync filaments" $color="#b9b9bc"><AmsIcon /></IconButton>
        </SettingsLine>
        <IconButton type="button" aria-label="Filament settings"><GearIcon /></IconButton>
      </HeaderTools>
    </PanelHeader>
    <Filaments>
      {filaments.map(f => (
        <Filament key={f.id}>
          <Swatch type="button" $color={f.color} $text={f.text}>{f.id}</Swatch>
          <Combo label={`Filament ${f.id}`} value="Bambu PLA Silk+" width={148} size={13} />
          <FilamentEdit type="button" aria-label={`Edit filament ${f.id}`}><EditIcon /></FilamentEdit>
        </Filament>
      ))}
    </Filaments>

    <PanelHeader $gap={10} $end={9}>
      <ProcessIcon />
      <PanelTitle>Process</PanelTitle>
      <ScopeSwitch>
        <ScopeButton type="button" $active>Global</ScopeButton>
        <ScopeButton type="button">Objects</ScopeButton>
      </ScopeSwitch>
      <HeaderTools $gap={3}>
        <PanelTitle as="label" htmlFor="advanced-mode">Advanced</PanelTitle>
        <Switch id="advanced-mode" type="checkbox" defaultChecked />
        <IconButton type="button" aria-label="Parameter table" $color="#b9b9bc"><ListIcon /></IconButton>
        <IconButton type="button" aria-label="Compare presets"><CompareIcon /></IconButton>
      </HeaderTools>
    </PanelHeader>
    <PresetLine>
      <SettingsLine $gap={8}>
        <IconButton type="button" aria-label="Reset preset" $color="#ec7250"><UndoIcon /></IconButton>
        <Combo label="Process preset" value="* 0.20mm Standard @BBL X1C" width={325} />
      </SettingsLine>
      <PresetTools>
        <IconButton type="button" aria-label="Save preset" $color="#d8d8da"><SmallSaveIcon /></IconButton>
        <IconButton type="button" aria-label="Search" $color="#d8d8da"><SearchIcon /></IconButton>
      </PresetTools>
    </PresetLine>
    <Tabs>
      {['Quality', 'Strength', 'Speed', 'Support', 'Others'].map(tab => (
        <Tab key={tab} type="button" $active={tab === 'Support'}>{tab}</Tab>
      ))}
    </Tabs>
    <ScrollArea>
      <Options>
        {groups.map(group => (
          <OptionGroup key={group.name}>
            <GroupTitle>
              {group.icon}
              <GroupName>{group.name}</GroupName>
            </GroupTitle>
            {group.options.map(option => <Option key={option.label} option={option} />)}
          </OptionGroup>
        ))}
      </Options>
      <ScrollTrack><ScrollThumb /></ScrollTrack>
    </ScrollArea>
  </Sidebar>
)

const AppToolbar = () => (
  <Toolbar>
    <ToolGroup $after={9}>
      <Tool $width={44} name="cube" label="Add" />
      <Tool $width={44} name="addPlate" label="Add plate" />
      <Tool $width={44} name="auto" label="Auto orient" />
      <Tool $width={44} name="arrange" label="Arrange" />
    </ToolGroup>
    <ToolGroup>
      <Tool $width={44} name="objects" label="Split to objects" disabled />
      <Tool $width={44} name="parts" label="Split to parts" disabled />
      <Tool $width={44} name="layers" label="Variable layer height" />
    </ToolGroup>
    <ToolDivider />
    <ToolGroup>
      <Tool name="move" label="Move" />
      <Tool name="rotate" label="Rotate" />
      <Tool name="scale" label="Scale" />
      <Tool name="flatten" label="Lay on face" />
      <Tool name="cut" label="Cut" />
      <Tool name="boolean" label="Mesh boolean" disabled />
      <Tool name="support" label="Support painting" />
      <Tool name="seam" label="Seam painting" />
      <Tool name="text" label="Text shape" />
      <Tool name="paint" label="Color painting" />
      <Tool name="measure" label="Measure" />
      <Tool name="assemble" label="Assemble" disabled />
      <Tool name="fit" label="Brim ears" />
    </ToolGroup>
    <ToolDivider />
    <Tool name="puzzle" label="Assembly view" />
  </Toolbar>
)

const App = () => (
  <Shell>
    <GlobalStyle />
    <TitleBar>
      <TitleGroup $gap={19}>
        <TitleButton type="button">
          <Icon size={18} strokeWidth="1.500"><path d="M1 3h16M1 9h16M1 15h16" /></Icon>
          File
        </TitleButton>
        <TitleButton type="button" aria-label="More"><Chevron size={14} /></TitleButton>
        <TitleDivider />
      </TitleGroup>
      <TitleGroup $gap={21}>
        <TitleButton type="button" aria-label="Save">
          <Icon size={18} strokeWidth="1.300">
            <path d="M2 1.500h10l4 4v11H2z" />
            <path d="M4.500 2h6v4h-6zM4 11h10v5H4z" fill="currentColor" />
          </Icon>
        </TitleButton>
        <TitleButton type="button" aria-label="Undo">
          <Icon size={18} fill="currentColor" stroke="none"><path d="M1 8l8-6v4c5 0 7 4 8 10-2-4-4-5-8-5v4z" /></Icon>
        </TitleButton>
        <TitleButton type="button" aria-label="Redo">
          <Icon size={18} fill="currentColor" stroke="none"><path d="M17 8L9 2v4c-5 0-7 4-8 10 2-4 4-5 8-5v4z" /></Icon>
        </TitleButton>
        <TitleButton type="button">
          <Icon size={18} strokeWidth="1.300">
            <path d="M3.500 3.500h11v11h-11zM9 0v6M9 12v6M0 9h6M12 9h6M6.500 6.500h5v5h-5z" />
          </Icon>
          Calibration
        </TitleButton>
      </TitleGroup>
      <Title>PS Placeable V2 Middle</Title>
      <TitleGroup $gap={18}>
        <TitleButton type="button" aria-label="Minimize"><Icon size={14}><path d="M2 7h10" strokeWidth="1.500" /></Icon></TitleButton>
        <TitleButton type="button" aria-label="Restore">
          <Icon size={16}><path d="M1.500 1.500h9v9h-9zM5.500 5.500h9v9h-9z" /></Icon>
        </TitleButton>
        <TitleButton type="button" aria-label="Close"><Icon size={16}><path d="M3.500 3.500l9 9M12.500 3.500l-9 9" /></Icon></TitleButton>
      </TitleGroup>
    </TitleBar>

    <NavBar>
      <HomeButton type="button" aria-label="Home"><HomeIcon /></HomeButton>
      {navTabs.map(tab => (
        <NavTab key={tab.label} type="button" $active={tab.active}>
          {tab.icon}
          {tab.label}
        </NavTab>
      ))}
      <NavActions>
        <SplitButton>
          <SplitToggle type="button" aria-label="Slice options"><Chevron size={10} /></SplitToggle>
          <SplitMain type="button" $primary>Slice plate</SplitMain>
          <Pointer width="14" height="22" viewBox="0 0 14 22" aria-hidden="true">
            <path d="M1 1v15l3.500-3 2.500 6.500 3-1.200L7.500 12H12z" fill="#fff" stroke="#000" />
          </Pointer>
        </SplitButton>
        <SplitButton>
          <SplitToggle type="button" aria-label="Print options"><Chevron size={10} /></SplitToggle>
          <SplitMain type="button">Print plate</SplitMain>
        </SplitButton>
      </NavActions>
    </NavBar>

    <Body>
      <AppSidebar />
      <Viewport>
        <Scene viewBox="420 67 1500 1013" preserveAspectRatio="xMidYMid slice" role="img" aria-label="Build plate">
          <Plate />
          <Axes />
          <Model />
        </Scene>
        <AppToolbar />
        <InfoCard>
          <InfoText>
            Object name: PS Placeable V2 Top Open.stl
            <br />
            Size: 193.466 x 99.12 x 16.3709 mm
            <br />
            Volume: 44993.4 mm³
            <br />
            Triangles: 1490
          </InfoText>
          <InfoTools>
            <RoundButton type="button" $size={26} aria-label="Close">
              <Icon size={16} strokeWidth="1.300"><path d="M1 1l14 14M15 1L1 15" /></Icon>
            </RoundButton>
            <RoundButton type="button" $size={12} aria-label="Collapse">
              <Icon size={6}><path d="M0 3h6" /></Icon>
            </RoundButton>
          </InfoTools>
        </InfoCard>
      </Viewport>
    </Body>
  </Shell>
)

export default App
